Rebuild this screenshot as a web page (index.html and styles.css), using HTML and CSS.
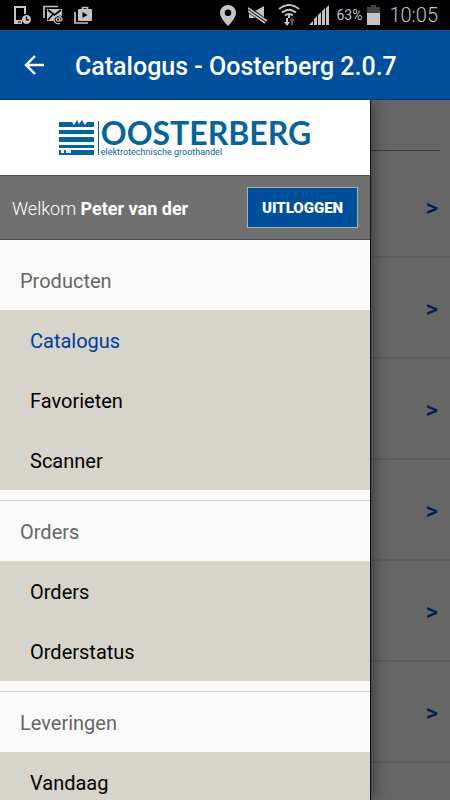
FILE: index.html
```html
<!DOCTYPE html>
<html lang="nl">
<head>
<meta charset="utf-8">
<meta name="viewport" content="width=device-width, initial-scale=1">
<title>Catalogus - Oosterberg</title>
<link rel="stylesheet" href="styles.css">
</head>
<body>
<div class="status">
  <div class="status-group notices">
    <svg width="18" height="20" viewBox="0 0 18 20" fill="none" stroke="currentColor">
      <path d="M1 18V2H11V9" stroke-width="2"/><path d="M0 17h8" stroke-width="4"/><path d="M4 17h3" stroke="#000"/>
      <circle cx="12.500" cy="14.500" r="4.500" fill="currentColor" stroke="none"/><path d="M12.500 11.500v3.300h2.500" stroke="#000" stroke-width="1.200"/>
    </svg>
    <svg width="20" height="20" viewBox="0 0 20 20" fill="none" stroke="currentColor">
      <path d="M1 13V1.500H15" stroke-width="1.700"/><path d="M4 4h15v7c-4-2-8 0-8.500 5H4z" fill="currentColor" stroke="none"/>
      <path d="M5 5l6.500 5L18 5M5 15l5-6" stroke="#000" stroke-width="1.700"/>
      <circle cx="15" cy="14.500" r="1.700" stroke-width="1.200"/><path d="M16.700 12.500v2.500c0 1.500 2.300 1.200 2.300-.8a4 4 0 1 0-2 4" stroke-width="1.200"/>
    </svg>
    <svg width="18" height="20" viewBox="0 0 18 20" fill="none" stroke="currentColor">
      <path d="M1 7V18H14" stroke-width="1.700"/><rect x="4" y="4" width="14" height="12" rx="1" fill="currentColor" stroke="none"/><path d="M8.500 5V2.500h5V5" stroke-width="1.700"/><path d="M8.500 7v6l5-3z" fill="#000" stroke="none"/>
    </svg>
  </div>
  <div class="status-group">
    <svg width="16" height="21" viewBox="0 0 16 21" fill="currentColor"><path fill-rule="evenodd" d="M8 0a8 8 0 0 0-8 8c0 5.500 8 13 8 13s8-7.500 8-13a8 8 0 0 0-8-8zm0 4.500a3.300 3.300 0 1 1 0 6.600 3.300 3.300 0 0 1 0-6.600z"/></svg>
    <svg class="mute" width="20" height="20" viewBox="0 0 20 20" fill="currentColor"><path d="M1 6h6l9-5v17l-9-5H1z"/><path d="M0 4l19 14" stroke="#000" stroke-width="6"/><path d="M0 3l19 13M0 6l17 12" stroke="currentColor" stroke-width="1.800"/></svg>
    <svg class="wifi" width="22" height="22" viewBox="0 0 22 22" fill="none" stroke="currentColor" stroke-width="2"><path d="M1 5q10-8 20 0M4 8.500q7-5.500 14 0M7 11.500q4-3 8 0"/><path d="M11 11v3"/><path d="M8 14v4H6l3 4 3-4h-2v-4z" fill="currentColor" stroke="none"/><path d="M13 21v-4h-2l3-4 3 4h-2v4z" fill="#555" stroke="none"/></svg>
    <svg class="signal" width="20" height="20" viewBox="0 0 20 20" fill="currentColor"><path d="M0 20l4-4v4zM5 20v-6l3-3v9zM9 20V10l3-3v13zM13 20V6l3-3v17zM17 20V3l3-3v20z"/></svg>
    <span class="percent">63%</span>
    <svg class="battery" width="13" height="20" viewBox="0 0 13 20"><path fill="#444" d="M4 0h5v2h4v7H0V2h4z"/><path fill="currentColor" d="M0 8h13v12H0z"/></svg>
    <time class="clock">10:05</time>
  </div>
</div>
<header class="appbar">
  <button class="back" type="button" aria-label="Terug"><svg width="20" height="20" viewBox="0 0 20 20" fill="none" stroke="currentColor" stroke-width="2.400"><path d="M20 10H2M11 1L2 10l9 9"/></svg></button>
  <h1 class="title">Catalogus - Oosterberg 2.0.7</h1>
</header>
<div class="screen">
  <main class="catalog">
    <div class="search"></div>
    <a class="row" href="#">&gt;</a><a class="row" href="#">&gt;</a><a class="row" href="#">&gt;</a><a class="row" href="#">&gt;</a><a class="row" href="#">&gt;</a><a class="row" href="#">&gt;</a>
  </main>
  <aside class="drawer">
    <div class="brand">
      <svg width="40" height="36" viewBox="0 0 40 36" fill="currentColor"><path d="M0 2h13l2 3 3-5 2 4 3-4 3 5 2-3h7v5H0zM0 10h35v4H0zM0 17h35v5H0zM0 25h35v3H0zM0 30h2v3H0zM5 30h2v3H5zM12 30h23v3H12z"/><path d="M0 33h35v2H0z"/><path d="M39 1h1v34h-1z"/></svg>
      <div class="brand-text"><span class="brand-name">OOSTERBERG</span><span class="brand-tag">elektrotechnische groothandel</span></div>
    </div>
    <div class="account">
      <p class="welcome">Welkom <b>Peter van der</b></p>
      <button class="logout" type="button">UITLOGGEN</button>
    </div>
    <nav class="menu">
      <section class="group"><h2 class="heading">Producten</h2>
        <a class="item active" href="#">Catalogus</a><a class="item" href="#">Favorieten</a><a class="item" href="#">Scanner</a></section>
      <section class="group"><h2 class="heading">Orders</h2>
        <a class="item" href="#">Orders</a><a class="item" href="#">Orderstatus</a></section>
      <section class="group"><h2 class="heading">Leveringen</h2>
        <a class="item" href="#">Vandaag</a></section>
    </nav>
  </aside>
</div>
</body>
</html>
```
FILE: styles.css
```css
* { box-sizing: border-box; }
body { margin: 0; height: 100vh; display: flex; flex-direction: column; overflow: hidden; font-family: Roboto, "Liberation Sans", sans-serif; color: #000; }
h1, h2, p { margin: 0; font-weight: 400; }
a { color: inherit; text-decoration: none; }
button { font: inherit; color: inherit; cursor: pointer; }
svg { display: block; flex: none; }

.status { flex: none; height: 30px; padding: 0 12px 0 14px; display: flex; align-items: center; justify-content: space-between; background: #000; color: #c4c4c4; }
.status-group { display: flex; align-items: center; }
.notices { gap: 11px; }
.mute { margin-left: 12px; }
.wifi { margin-left: 10px; }
.signal { margin-left: 9px; }
.percent { margin-left: 7px; font-size: 14px; }
.battery { margin-left: 5px; }
.clock { margin-left: 9px; font-size: 20px; font-weight: 300; }

.appbar { flex: none; height: 70px; padding: 0 24px; display: flex; align-items: center; background: #004f9a; border-bottom: 1px solid #003a80; color: #fff; }
.back { padding: 0; border: 0; background: none; }
.title { margin-left: 31px; padding-top: 3px; font-size: 25px; font-weight: 500; white-space: nowrap; }

.screen { flex: 1; min-height: 0; position: relative; overflow: hidden; background: #666; }
.catalog { color: #001f4d; }
.search { height: 51px; margin: 0 10px 6px; border-bottom: 1px solid #3c3c3c; }
.row { height: 101px; padding: 3px 12px 0 0; display: flex; align-items: center; justify-content: flex-end; border-bottom: 2px solid #5d5d5d; font-size: 24px; font-weight: 500; }

.drawer { position: absolute; top: 0; bottom: 0; left: 0; right: 80px; overflow: hidden; background: #fafafa; box-shadow: 1px 0 0 #111, 2px 0 16px rgba(0, 0, 0, 0.5); }
.brand { height: 75px; display: flex; align-items: center; justify-content: center; background: #fff; color: #05659b; }
.brand-text { margin-left: 2px; display: flex; flex-direction: column; }
.brand-name { font: 700 32px/28px Lato, sans-serif; }
.brand-tag { font: 9px/10px Roboto, sans-serif; }
.account { height: 65px; padding: 0 12px; display: flex; align-items: center; justify-content: space-between; background: #707070; border-top: 1px solid #4c4c4c; border-bottom: 1px solid #4c4c4c; color: #fff; }
.welcome { font-size: 18px; font-weight: 300; padding-top: 2px; }
.welcome b { font-weight: 700; }
.logout { width: 111px; height: 41px; padding: 0; border: 1px solid #b0b0b0; background: #004f9a; font-size: 15px; font-weight: 900; }
.menu { padding-top: 10px; }
.heading { height: 60px; padding: 2px 20px 0; display: flex; align-items: center; font-size: 20px; color: #666; }
.group + .group { margin-top: 10px; border-top: 1px solid #d2d2d2; }
.item { height: 60px; padding: 2px 30px 0; display: flex; align-items: center; background: #d7d4cb; font-size: 20px; }
.active { color: #003c9d; }
```
